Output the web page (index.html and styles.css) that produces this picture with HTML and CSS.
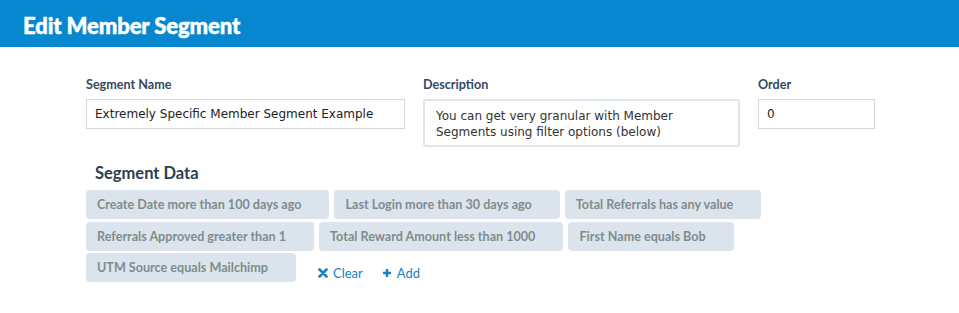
FILE: index.html
```html
<!DOCTYPE html>
<html lang="en">
<head>
  <meta charset="UTF-8" />
  <title>Edit Member Segment</title>
  <link rel="stylesheet" href="styles.css">
</head>
<body>

  <!-- Header -->
  <div class="page-header">
    <h1>Edit Member Segment</h1>
  </div>

  <div class="segment-form">
    <div class="fields">
      <div class="field">
        <label>Segment Name</label>
        <input type="text" class="text-input" value="Extremely Specific Member Segment Example">
      </div>
      <div class="field">
        <label>Description</label>
        <div class="text-area">You can get very granular with Member Segments using filter options (below)</div>
      </div>
      <div class="field">
        <label>Order</label>
        <input type="text" class="text-input" value="0">
      </div>
    </div>

    <h2>Segment Data</h2>
    <div class="filters">
      <div class="chip-row">
        <span class="chip">Create Date more than 100 days ago</span>
        <span class="chip">Last Login more than 30 days ago</span>
        <span class="chip">Total Referrals has any value</span>
      </div>
      <div class="chip-row">
        <span class="chip">Referrals Approved greater than 1</span>
        <span class="chip">Total Reward Amount less than 1000</span>
        <span class="chip">First Name equals Bob</span>
      </div>
      <div class="chip-row">
        <span class="chip">UTM Source equals Mailchimp</span>
        <a class="action clear" href="#">
          <svg class="icon" viewBox="0 0 10 10" width="10" height="10"><path d="M1.5 1.5 L8.5 8.5 M8.5 1.5 L1.5 8.5" stroke="currentColor" stroke-width="2.6" stroke-linecap="round"/></svg>Clear
        </a>
        <a class="action" href="#">
          <svg class="icon" viewBox="0 0 10 10" width="10" height="10"><path d="M5 1 V9 M1 5 H9" stroke="currentColor" stroke-width="2.4"/></svg>Add
        </a>
      </div>
    </div>
  </div>

</body>
</html>
```

FILE: styles.css
```css
body {
  margin: 0;
  font-family: Lato, "Open Sans", sans-serif;
  background: #fff;
  color: #2c3e50;
}

.page-header {
  background: #0787cf;
  height: 47px;
  box-sizing: border-box;
  padding: 4px 0 0 23px;
  display: flex;
  align-items: center;
}

.page-header h1 {
  margin: 0;
  color: #fff;
  font-size: 22px;
  font-weight: 900;
  letter-spacing: -0.1px;
  -webkit-text-stroke: 0.5px #fff;
}

.segment-form {
  padding: 30px 0 0 86px;
}

.fields {
  display: grid;
  grid-template-columns: 319px 317px 117px;
  column-gap: 18px;
}

.field label {
  display: block;
  font-size: 12.6px;
  font-weight: 700;
  color: #34495e;
  margin-bottom: 7px;
}

.text-input, .text-area {
  box-sizing: border-box;
  width: 100%;
  font-family: "DejaVu Sans", sans-serif;
  font-size: 12px;
  color: #222;
  border: 1px solid #d6d6d6;
  background: #fff;
}

.text-input {
  height: 30px;
  padding: 0 8px;
  outline: none;
}

.text-area {
  height: 48px;
  padding: 7px 11px;
  line-height: 16px;
  border: 2px solid #dbe6ef;
  border-radius: 3px;
  color: #333;
}

h2 {
  margin: 16px 0 7px 9px;
  font-size: 16.5px;
  font-weight: 700;
  color: #2c3e50;
}

.filters {
  display: flex;
  flex-direction: column;
  gap: 2.5px;
}

.chip-row {
  display: flex;
  align-items: center;
  gap: 5px;
}

.chip {
  height: 29px;
  line-height: 29px;
  padding: 0 28px 0 11px;
  background: #dbe4ec;
  border-radius: 4px;
  font-size: 12.6px;
  font-weight: 700;
  color: #7f8c8d;
}

.action {
  display: flex;
  align-items: center;
  font-size: 13px;
  color: #1a7fc4;
  text-decoration: none;
  margin: 11px 0 0 17px;
}

.action + .action {
  margin-left: 14px;
}

.icon {
  margin-right: 5px;
}
```
